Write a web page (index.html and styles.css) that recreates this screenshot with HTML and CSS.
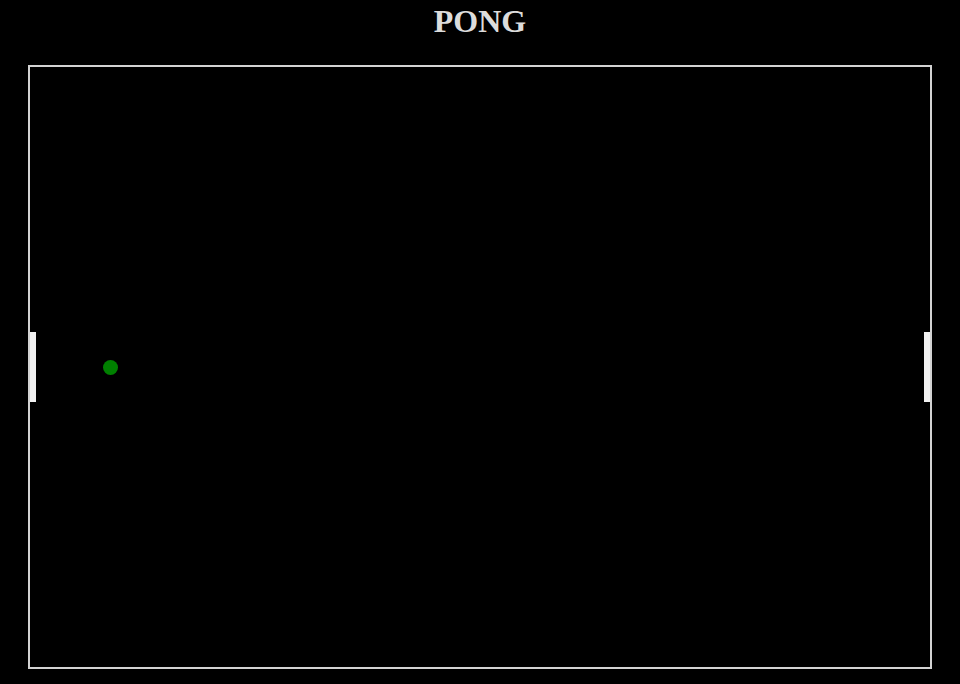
FILE: index.html
```html
<!DOCTYPE html>
<html>
<head>
<meta charset="utf-8">
<title>Pong</title>
<link rel="stylesheet" href="styles.css">
</head>
<body>
<div class="page">
  <h1 class="title">PONG</h1>
  <div class="board">
    <svg class="field" width="900" height="600" viewBox="0 0 900 600">
      <rect x="0" y="265" width="6" height="70" fill="#f2f2f2"/>
      <rect x="894" y="265" width="6" height="70" fill="#f2f2f2"/>
      <circle cx="80.5" cy="300.5" r="7.5" fill="#008000"/>
    </svg>
  </div>
</div>
</body>
</html>
```
FILE: styles.css
```css
html, body {
  margin: 0;
  padding: 0;
  background: #000;
}
.page {
  display: flex;
  flex-direction: column;
  align-items: center;
  width: 960px;
  height: 684px;
}
.title {
  margin: 3px 0 25px;
  height: 37px;
  line-height: 37px;
  font-family: "Liberation Serif", "Times New Roman", serif;
  font-size: 32px;
  font-weight: bold;
  color: #dcdcdc;
}
.board {
  width: 900px;
  height: 600px;
  border: 2px solid #d3d3d3;
  background: #000;
}
.field {
  display: block;
}
```
